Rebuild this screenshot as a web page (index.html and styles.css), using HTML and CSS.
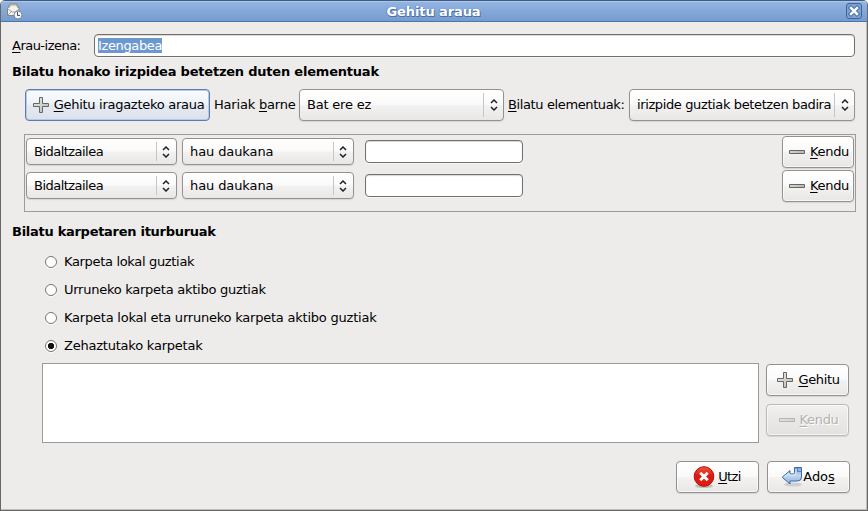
FILE: index.html
```html
<!DOCTYPE html>
<html lang="eu">
<head>
<meta charset="utf-8">
<title>Gehitu araua</title>
<link rel="stylesheet" href="styles.css">
</head>
<body>
<svg class="defs" width="0" height="0">
  <defs>
    <linearGradient id="metal" x1="0" y1="0" x2="1" y2="1"><stop offset="0" stop-color="#eeeeec"/><stop offset="1" stop-color="#b5b7b1"/></linearGradient>
    <linearGradient id="metal-bar" x1="0" y1="0" x2="1" y2="0"><stop offset="0" stop-color="#d5d7d2"/><stop offset="1" stop-color="#b5b7b1"/></linearGradient>
    <linearGradient id="red" x1="0" y1="0" x2="0" y2="1"><stop offset="0" stop-color="#f0563c"/><stop offset="0.45" stop-color="#de1b12"/><stop offset="1" stop-color="#e21a0c"/></linearGradient>
    <linearGradient id="blue" x1="0" y1="0" x2="0" y2="1"><stop offset="0" stop-color="#7ba4d4"/><stop offset="0.5" stop-color="#c1d8ef"/><stop offset="1" stop-color="#86add9"/></linearGradient>
    <symbol id="plus" viewBox="0 0 16 16"><path d="M6.500 .5h3v6h6v3h-6v6h-3v-6h-6v-3h6z" fill="url(#metal)" stroke="#656763"/></symbol>
    <symbol id="minus" viewBox="0 0 16 4"><path d="M.5 .5h15v3H.5z" fill="url(#metal-bar)" stroke="#656763"/></symbol>
    <symbol id="updown" viewBox="0 0 8 12"><path d="M1 4l3-3 3 3M1 8l3 3 3-3" fill="none" stroke="#222" stroke-width="1.5"/></symbol>
  </defs>
</svg>
<div class="window">
  <header class="titlebar">
    <svg class="app-icon" width="17" height="17" viewBox="0 0 17 17">
      <path d="M1.500 5.500L4 1h7l2 4.500v7H1.500z" fill="#f3f3ee" stroke="#85857e"/>
      <path d="M3 5l1.500-3h5.800L12 5M2 6l4 3h3l4-3M2 12l4-4" fill="none" stroke="#a5a59c"/>
      <circle cx="12" cy="12" r="4" fill="#f5f7fa" stroke="#7688a5"/>
      <path d="M11.500 9v3.500H14" fill="none" stroke="#3f5270"/>
    </svg>
    <h1>Gehitu araua</h1>
    <svg class="close" width="16" height="16" viewBox="0 0 16 16">
      <rect x=".5" y=".5" width="15" height="15" rx="2.500" fill="#7da3d6" stroke="#3d639b"/>
      <path d="M5 5l6 6m0-6l-6 6" stroke="#3d639b" stroke-width="4.400" stroke-linecap="square"/>
      <path d="M5 5l6 6m0-6l-6 6" stroke="#f5f8fc" stroke-width="2.600" stroke-linecap="square"/>
    </svg>
  </header>
  <main class="content">
    <div class="name-row"><label><u>A</u>rau-izena:</label><div class="entry name"><span class="selection">Izengabea</span></div></div>
    <h2>Bilatu honako irizpidea betetzen duten elementuak</h2>
    <div class="tools">
      <button class="button focus add-rule"><svg class="plus"><use href="#plus"/></svg><span><u>G</u>ehitu iragazteko araua</span></button>
      <label class="threads">Hariak <u>b</u>arne</label>
      <div class="combo thread-combo"><span>Bat ere ez</span><i></i><svg class="updown"><use href="#updown"/></svg></div>
      <label class="find"><u>B</u>ilatu elementuak:</label>
      <div class="combo match-combo"><span>irizpide guztiak betetzen badira</span><i></i><svg class="updown"><use href="#updown"/></svg></div>
    </div>
    <section class="rules">
      <div class="rule">
        <div class="combo part"><span>Bidaltzailea</span><i></i><svg class="updown"><use href="#updown"/></svg></div>
        <div class="combo test"><span>hau daukana</span><i></i><svg class="updown"><use href="#updown"/></svg></div>
        <div class="entry value"></div>
        <button class="button remove"><svg class="minus"><use href="#minus"/></svg><span><u>K</u>endu</span></button>
      </div>
      <div class="rule">
        <div class="combo part"><span>Bidaltzailea</span><i></i><svg class="updown"><use href="#updown"/></svg></div>
        <div class="combo test"><span>hau daukana</span><i></i><svg class="updown"><use href="#updown"/></svg></div>
        <div class="entry value"></div>
        <button class="button remove"><svg class="minus"><use href="#minus"/></svg><span><u>K</u>endu</span></button>
      </div>
    </section>
    <h2 class="sources-title">Bilatu karpetaren iturburuak</h2>
    <div class="radios">
      <label class="local"><b class="radio"></b>Karpeta lokal guztiak</label>
      <label class="remote"><b class="radio"></b>Urruneko karpeta aktibo guztiak</label>
      <label><b class="radio"></b>Karpeta lokal eta urruneko karpeta aktibo guztiak</label>
      <label><b class="radio on"></b>Zehaztutako karpetak</label>
    </div>
    <div class="folders">
      <div class="list"></div>
      <div class="folder-actions">
        <button class="button"><svg class="plus"><use href="#plus"/></svg><span><u>G</u>ehitu</span></button>
        <button class="button disabled"><svg class="minus"><use href="#minus"/></svg><span><u>K</u>endu</span></button>
      </div>
    </div>
    <footer class="actions">
      <button class="button cancel">
        <svg width="22" height="22" viewBox="0 0 22 22"><ellipse cx="11" cy="20" rx="9" ry="2" fill="#777" opacity=".4"/><circle cx="11" cy="10.500" r="9.800" fill="url(#red)" stroke="#b20b08"/><path d="M7.300 6.800l7.400 7.400m0-7.400l-7.400 7.400" stroke="#fff" stroke-width="3"/></svg>
        <span><u>U</u>tzi</span>
      </button>
      <button class="button ok">
        <svg width="22" height="22" viewBox="0 0 22 22"><ellipse cx="12" cy="18.500" rx="9" ry="2" fill="#777" opacity=".25"/><path d="M13.500 1.500h7v9.500q0 4-4 4H9v3L1.200 11.300 9 4.500v3.500h3q1.500 0 1.500-1.500z" fill="url(#blue)" stroke="#3a6ca8" stroke-linejoin="round"/><path d="M16.500 2v3.500h3.500" fill="none" stroke="#3a6ca8" opacity=".7"/><path d="M3 11l5-4v2h5q2 0 2-2V3" fill="none" stroke="#e9f2fb" opacity=".8"/></svg>
        <span>Ado<u>s</u></span>
      </button>
    </footer>
  </main>
</div>
</body>
</html>
```
FILE: styles.css
```css
* { box-sizing: border-box; }
body { margin: 0; background: #fff; font: 13px/16px "DejaVu Sans", sans-serif; color: #000; }
.defs { position: absolute; }
u { text-decoration: underline; text-underline-offset: 2px; text-decoration-thickness: 1px; text-decoration-skip-ink: none; }
.window { width: 868px; height: 511px; background: #edeceb; border: 1px solid #696765; border-top: 0; border-radius: 5px 5px 0 0; overflow: hidden; box-shadow: inset -1px -1px #c0bebc; }
.titlebar { display: flex; align-items: center; height: 22px; padding: 0 5px; background: linear-gradient(#94b5e2, #769bcd); border-top: 1px solid #405b83; border-bottom: 1px solid #4d76ae; box-shadow: inset 0 1px #afc8e9; }
.titlebar h1 { flex: 1; margin: 0; padding: 1px 2px 0 0; text-align: center; font-size: 13px; line-height: 20px; color: #fff; letter-spacing: -.1px; text-shadow: 1px 1px #4772aa, 0 1px #4772aa, -1px 0 #658fc7; }
.app-icon { margin-top: 1px; }
.close { margin-top: -1px; }
.content { padding: 12px 11px 0; }
.name-row { display: flex; align-items: center; height: 23px; }
.name-row label { width: 82px; letter-spacing: -.52px; }
.entry { height: 23px; background: #fff; border: 1px solid #72706d; border-radius: 4px; box-shadow: inset 0 1px 1px #d7d6d4, 0 1px #f7f7f6; }
.name { width: 761px; padding: 3px 3px; }
.selection { display: inline-block; height: 15px; line-height: 15px; color: #fff; background: #6d98ce; letter-spacing: -.36px; }
h2 { margin: 6px 0 9px; font-size: 13px; line-height: 17px; font-weight: bold; letter-spacing: -.21px; }
.tools { display: flex; align-items: flex-start; height: 33px; margin-left: 12px; }
.tools label { line-height: 32px; }
.button { display: flex; align-items: center; justify-content: center; gap: 6px; height: 32px; width: 83px; margin: 0; padding: 0; color: #000; font: inherit; letter-spacing: -.35px; white-space: nowrap; background: linear-gradient(#fff 0%, #fafafa 48%, #f3f2f1 52%, #e8e7e6); border: 1px solid #94918e; border-radius: 4px; box-shadow: 0 1px 1px #d6d5d3, inset 0 0 0 1px #ffffffa0; }
.button svg { flex: none; }
.plus { width: 16px; height: 16px; }
.minus { width: 16px; height: 4px; }
.add-rule { flex: none; width: 185px; margin-left: 1px; gap: 5px; padding-left: 2px; letter-spacing: -.28px; }
.focus { border-color: #5b7eaf; background: linear-gradient(#fbfcfe, #edf1f7 48%, #e4e9f1 52%, #dce2ec); box-shadow: inset 0 0 0 1px #b4cae6; }
.threads { flex: none; width: 89px; padding-left: 4px; white-space: nowrap; letter-spacing: -.2px; }
.find { flex: none; width: 125px; padding-left: 4px; white-space: nowrap; letter-spacing: -.38px; }
.combo { display: flex; flex: none; align-items: center; height: 32px; padding: 0 5px 0 7px; white-space: nowrap; background: linear-gradient(#fff, #fafafa 48%, #f3f2f1 52%, #e8e7e6); border: 1px solid #94918e; border-radius: 4px; box-shadow: 0 1px 1px #d6d5d3; }
.combo span { flex: 1; }
.combo i { flex: none; width: 1px; align-self: stretch; margin: 3px 6px 3px 0; background: #c8c6c4; }
.updown { flex: none; width: 8px; height: 12px; }
.thread-combo { width: 205px; letter-spacing: -.2px; }
.match-combo { width: 226px; letter-spacing: -.38px; }
.rules { width: 832px; height: 78px; margin: 12px 0 0 12px; padding: 1px; border: 1px solid #9d9b99; }
.rule { display: flex; height: 34px; align-items: flex-start; }
.rule .combo { height: 27px; margin-top: 2px; padding-right: 6px; }
.rule .combo i { margin-right: 5px; }
.part { width: 151px; margin-right: 5px; letter-spacing: -.53px; }
.test { width: 172px; margin-right: 11px; letter-spacing: -.1px; }
.value { width: 158px; height: 23px; margin-top: 4px; }
.remove { width: 72px; margin-left: auto; gap: 5px; padding-left: 2px; }
.sources-title { margin: 11px 0 8px; letter-spacing: -.28px; }
.radios label { display: flex; align-items: center; height: 28px; padding-left: 33px; gap: 7px; letter-spacing: -.22px; }
.radios .local { letter-spacing: -.33px; }
.radios .remote { letter-spacing: -.26px; }
.radio { width: 12px; height: 12px; border: 1px solid #777572; border-radius: 50%; background: #fff; box-shadow: 0 1px #fafafa; }
.on { background: radial-gradient(circle, #111 0 2.500px, #333 3px, #fff 3.500px); }
.folders { display: flex; gap: 7px; margin: 3px 0 0 30px; }
.list { width: 717px; height: 80px; border: 1px solid #9d9b99; background: #fff; }
.folder-actions { display: grid; align-content: start; gap: 8px; padding-top: 1px; height: 80px; }
.folder-actions .button { gap: 5px; padding-left: 2px; }
.disabled { color: #b5b2ae; background: linear-gradient(#f1f0ef, #e9e8e7 50%, #e3e2e1); border-color: #bbb9b7; text-shadow: 1px 1px #fff; }
.disabled svg { opacity: .4; }
.actions { display: flex; justify-content: flex-end; gap: 8px; margin: 18px 6px 0 0; }
.actions .cancel { gap: 3px; padding-right: 1px; letter-spacing: -.6px; }
.actions .ok { gap: 0; padding-right: 1px; letter-spacing: -.1px; }
```
